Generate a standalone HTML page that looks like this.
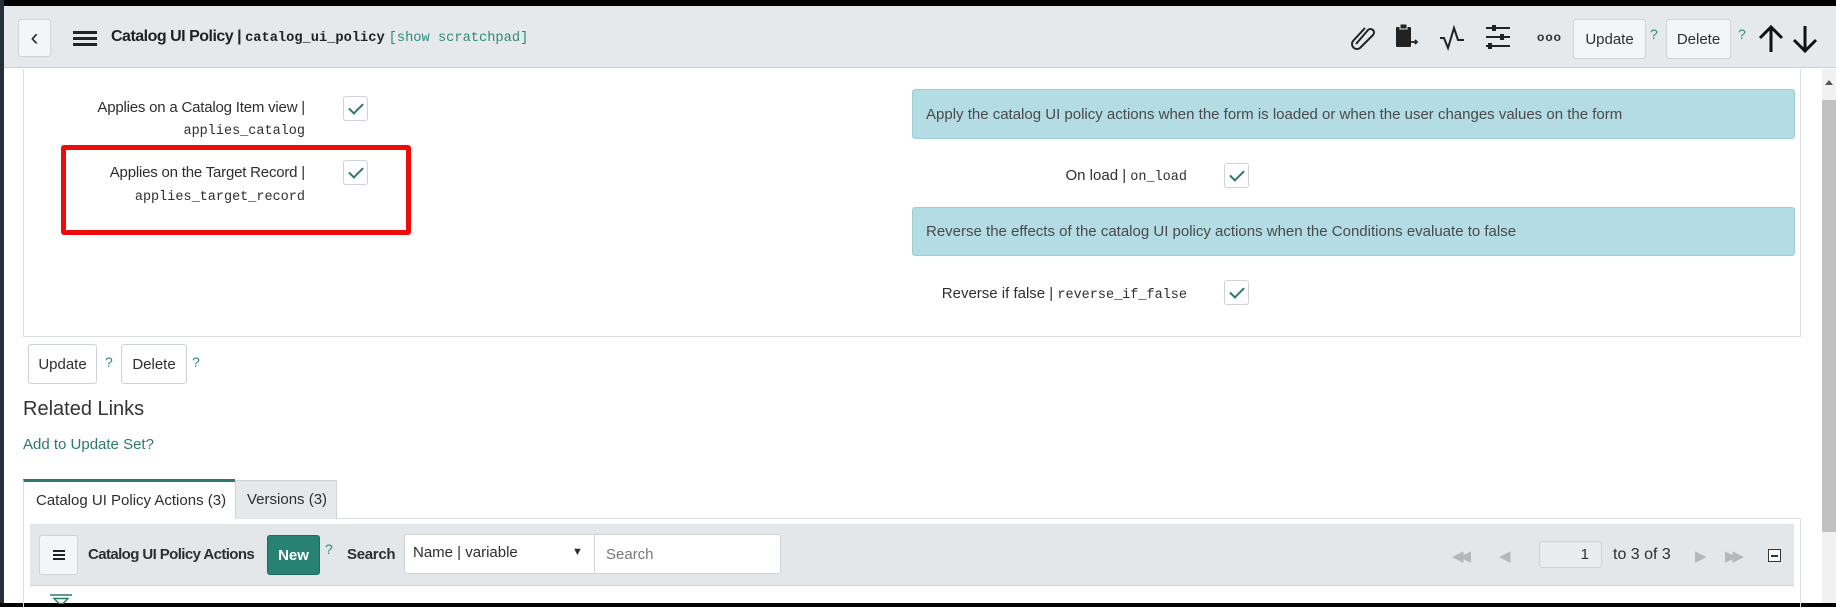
<!DOCTYPE html>
<html><head><meta charset="utf-8"><style>
*{box-sizing:border-box;margin:0;padding:0}
body{width:1836px;height:607px;overflow:hidden;background:#fff;position:relative;font-family:"Liberation Sans",sans-serif;color:#2e2e2e;font-size:15px}
.a{position:absolute;white-space:nowrap}
.mono{font-family:"Liberation Mono",monospace;font-size:13.5px}
.btn{position:absolute;border:1px solid #cfd3d6;border-radius:3px;background:#fff;font-size:15px;display:flex;align-items:center;justify-content:center}
.cb{position:absolute;width:25px;height:25px;border:1px solid #cfd3d6;border-radius:3px;background:#fff}
.cb:after{content:"";position:absolute;left:8px;top:3px;width:6px;height:12px;border:solid #2b7a6d;border-width:0 2.5px 2.5px 0;transform:rotate(45deg)}
.q{position:absolute;color:#2b8a7b;font-size:14px}
.blue{position:absolute;background:#b3dce4;border:1px solid #9ccdd8;border-radius:3px;color:#4a4a4a;font-size:15px;padding-left:13px;display:flex;align-items:center}
</style></head><body>
<div class="a" style="left:0;top:0;width:1836px;height:6px;background:#000"></div>
<div class="a" style="left:0;top:0;width:4px;height:607px;background:#25303a"></div>
<div class="a" style="left:0;top:603px;width:1836px;height:4px;background:#000"></div>
<!-- header -->
<div class="a" style="left:4px;top:6px;width:1832px;height:62px;background:#e6e9eb;border-bottom:1px solid #cdd1d4"></div>
<div class="btn" style="left:18px;top:19px;width:33px;height:38px;background:#f4f5f6;font-size:24px">‹</div>
<div class="a" style="left:73px;top:31px;width:24px;height:3px;background:#222;box-shadow:0 6px 0 #222,0 12px 0 #222"></div>
<div class="a" style="left:111px;top:28px;font-size:16px;font-weight:bold;letter-spacing:-0.5px;color:#222">Catalog UI Policy | <span class="mono" style="font-size:13.7px;letter-spacing:0">catalog_ui_policy</span> <span class="mono" style="font-size:13.7px;letter-spacing:0;color:#2b8a7b;font-weight:normal">[show scratchpad]</span></div>
<svg class="a" style="left:1348px;top:22px" width="30" height="30" viewBox="0 0 30 30"><path d="M8 22 L20 8 a3.5 3.5 0 0 1 5 5 L12 26 a5 5 0 0 1 -7 -7 L17 6" fill="none" stroke="#222" stroke-width="2"/></svg>
<svg class="a" style="left:1394px;top:22px" width="26" height="30" viewBox="0 0 26 30"><rect x="2" y="5" width="15" height="20" rx="1" fill="#222"/><rect x="6" y="2" width="7" height="5" fill="#222" stroke="#e6e9eb" stroke-width="1"/><path d="M17 20 h6 m-2 -2 l2 2 -2 2" stroke="#222" stroke-width="1.8" fill="none"/></svg>
<svg class="a" style="left:1439px;top:22px" width="28" height="30" viewBox="0 0 28 30"><path d="M1 16 h4 l4 10 l6 -20 l4 12 h6" fill="none" stroke="#222" stroke-width="2"/></svg>
<svg class="a" style="left:1485px;top:23px" width="26" height="28" viewBox="0 0 26 28"><path d="M1 5h24M1 14h24M1 23h24" stroke="#222" stroke-width="2"/><rect x="7" y="2" width="4" height="6" fill="#222"/><rect x="15" y="11" width="4" height="6" fill="#222"/><rect x="3" y="20" width="4" height="6" fill="#222"/></svg>
<div class="a" style="left:1537px;top:30px;font-size:12px;font-weight:bold;letter-spacing:1px">ooo</div>
<div class="btn" style="left:1573px;top:19px;width:73px;height:40px;background:#f4f5f6">Update</div>
<div class="q" style="left:1650px;top:26px">?</div>
<div class="btn" style="left:1666px;top:19px;width:65px;height:40px;background:#f4f5f6">Delete</div>
<div class="q" style="left:1738px;top:26px">?</div>
<svg class="a" style="left:1757px;top:24px" width="28" height="30" viewBox="0 0 28 30"><path d="M14 28V4M3 14L14 3l11 11" fill="none" stroke="#111" stroke-width="3"/></svg>
<svg class="a" style="left:1791px;top:24px" width="28" height="30" viewBox="0 0 28 30"><path d="M14 2v24M3 16l11 11 11-11" fill="none" stroke="#111" stroke-width="3"/></svg>
<!-- scrollbar -->
<div class="a" style="left:1822px;top:69px;width:14px;height:534px;background:#f1f1f1"></div>
<div class="a" style="left:1822px;top:100px;width:14px;height:432px;background:#c1c1c1"></div>
<div class="a" style="left:1825px;top:80px;width:0;height:0;border-left:4px solid transparent;border-right:4px solid transparent;border-bottom:5px solid #555"></div>
<!-- form panel -->
<div class="a" style="left:23px;top:69px;width:1778px;height:268px;border:1px solid #dcdfe2;border-top:none"></div>
<div class="a" style="left:0;top:99px;width:305px;text-align:right;letter-spacing:-0.2px">Applies on a Catalog Item view |</div>
<div class="a mono" style="left:0;top:124px;width:305px;text-align:right">applies_catalog</div>
<div class="cb" style="left:343px;top:96px"></div>
<div class="a" style="left:0;top:164px;width:305px;text-align:right;letter-spacing:-0.2px">Applies on the Target Record |</div>
<div class="a mono" style="left:0;top:190px;width:305px;text-align:right">applies_target_record</div>
<div class="cb" style="left:343px;top:160px"></div>
<div class="a" style="left:61px;top:145px;width:350px;height:90px;border:5px solid #ee0b0b;border-radius:3px"></div>
<div class="blue" style="left:912px;top:89px;width:883px;height:50px">Apply the catalog UI policy actions when the form is loaded or when the user changes values on the form</div>
<div class="a" style="left:900px;top:167px;width:287px;text-align:right">On load | <span class="mono">on_load</span></div>
<div class="cb" style="left:1224px;top:163px"></div>
<div class="blue" style="left:912px;top:207px;width:883px;height:49px">Reverse the effects of the catalog UI policy actions when the Conditions evaluate to false</div>
<div class="a" style="left:900px;top:285px;width:287px;text-align:right">Reverse if false | <span class="mono">reverse_if_false</span></div>
<div class="cb" style="left:1224px;top:280px"></div>
<!-- buttons -->
<div class="btn" style="left:28px;top:344px;width:69px;height:40px">Update</div>
<div class="q" style="left:105px;top:354px">?</div>
<div class="btn" style="left:121px;top:344px;width:66px;height:40px">Delete</div>
<div class="q" style="left:192px;top:354px">?</div>
<div class="a" style="left:23px;top:398px;font-size:20px;color:#333">Related Links</div>
<div class="a" style="left:23px;top:436px;font-size:15px;color:#2b7a6d">Add to Update Set?</div>
<!-- tabs -->
<div class="a" style="left:23px;top:479px;width:212px;height:40px;border-top:3px solid #2b7a6d;border-left:1px solid #dcdfe2;background:#fff;padding:10px 0 0 12px">Catalog UI Policy Actions (3)</div>
<div class="a" style="left:235px;top:480px;width:102px;height:39px;background:#e6e9eb;border:1px solid #d0d4d7;border-bottom:none;padding:10px 0 0 11px">Versions (3)</div>
<div class="a" style="left:337px;top:518px;width:1464px;height:1px;background:#dcdfe2"></div>
<div class="a" style="left:23px;top:518px;width:1778px;height:90px;border-left:1px solid #dcdfe2;border-right:1px solid #dcdfe2"></div>
<div class="a" style="left:30px;top:524px;width:1764px;height:62px;background:#e4e7ea;border-bottom:1px solid #d0d4d7"></div>
<div class="btn" style="left:39px;top:535px;width:39px;height:40px;background:#f4f5f6"><div style="width:12px;height:2.5px;background:#222;box-shadow:0 -4px 0 #222,0 4px 0 #222"></div></div>
<div class="a" style="left:88px;top:546px;font-weight:bold;letter-spacing:-0.6px">Catalog UI Policy Actions</div>
<div class="btn" style="left:267px;top:535px;width:53px;height:40px;background:#278273;border-color:#1f6b5f;color:#fff;font-weight:bold">New</div>
<div class="q" style="left:325px;top:541px">?</div>
<div class="a" style="left:347px;top:546px;font-weight:bold;letter-spacing:-0.3px">Search</div>
<div class="a" style="left:404px;top:534px;width:191px;height:40px;background:#fff;border:1px solid #d0d4d7;border-radius:3px 0 0 3px;padding:9px 0 0 8px">Name | variable<span style="position:absolute;left:167px;top:11px;font-size:11px">▼</span></div>
<div class="a" style="left:594px;top:534px;width:187px;height:40px;background:#fff;border:1px solid #d0d4d7;border-radius:0 3px 3px 0;padding:11px 0 0 11px;color:#777">Search</div>
<div class="a" style="left:1452px;top:547px;color:#b5b8bb;font-size:15px;letter-spacing:-4px">◀◀</div>
<div class="a" style="left:1499px;top:547px;color:#b5b8bb;font-size:15px">◀</div>
<div class="a" style="left:1539px;top:541px;width:63px;height:27px;border:1px solid #ccd0d3;border-radius:3px;background:#e9ecee;text-align:right;padding:4px 12px 0 0">1</div>
<div class="a" style="left:1613px;top:546px;font-size:16px">to 3 of 3</div>
<div class="a" style="left:1695px;top:547px;color:#b5b8bb;font-size:15px">▶</div>
<div class="a" style="left:1725px;top:547px;color:#b5b8bb;font-size:15px;letter-spacing:-4px">▶▶</div>
<div class="a" style="left:1768px;top:549px;width:13px;height:13px;border:1px solid #333;background:#fff"><div style="margin:5px 2px;height:1.5px;background:#333"></div></div>
<svg class="a" style="left:49px;top:594px" width="24" height="10" viewBox="0 0 24 10"><path d="M1 1h22M5 4.5h14l-5 5h-4z" fill="none" stroke="#2b7a6d" stroke-width="1.4"/></svg>
</body></html>
